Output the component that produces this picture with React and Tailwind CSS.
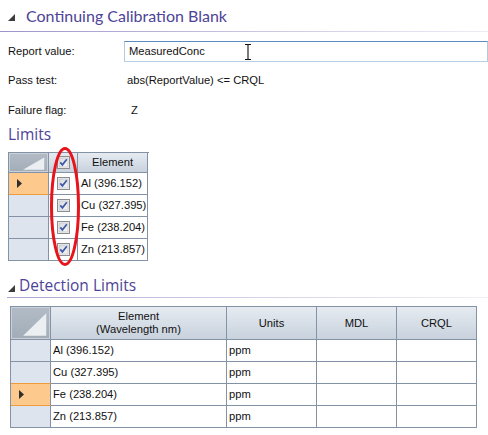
import React from "react";

const Tri = () => (
  <svg width="7" height="7" viewBox="0 0 7 7" className="shrink-0">
    <polygon points="7,0 7,7 0,7" fill="#3c3c3c" />
  </svg>
);

const Arrow = () => (
  <svg width="5" height="9" viewBox="0 0 5 9">
    <polygon points="0,0 5,4.5 0,9" fill="#2e2e2e" />
  </svg>
);

const Check = () => (
  <svg width="13" height="13" viewBox="0 0 13 13">
    <defs>
      <linearGradient id="cbg" x1="0" y1="0" x2="1" y2="1">
        <stop offset="0" stopColor="#d9dbde" />
        <stop offset="1" stopColor="#f6f6f6" />
      </linearGradient>
    </defs>
    <rect x="0.5" y="0.5" width="12" height="12" fill="#f4f4f4" stroke="#8a8c8f" />
    <rect x="2" y="2" width="9" height="9" fill="url(#cbg)" stroke="#b8bcc2" strokeWidth="0.6" />
    <path d="M3.3 6.4 L5.4 8.8 L9.8 3.2" fill="none" stroke="#3e57a8" strokeWidth="1.7" />
  </svg>
);

const Corner = ({ big }) => (
  <div className="w-full h-full bg-gradient-to-b from-[#b2bbc5] to-[#a3adb8] border border-[#c9d0d8] relative">
    <svg className="absolute inset-0 w-full h-full" viewBox="0 0 40 40" preserveAspectRatio="none">
      {big ? (
        <polygon points="12,37 37,37 37,7" fill="#eceff2" />
      ) : (
        <polygon points="14,37 37,37 37,8" fill="#eceff2" />
      )}
    </svg>
  </div>
);

const hdr = "bg-gradient-to-b from-[#e6ebf1] to-[#c8d2dd]";
const bc = "border-[#8392a5]";

export default function App() {
  const limits = ["Al (396.152)", "Cu (327.395)", "Fe (238.204)", "Zn (213.857)"];
  return (
    <div className="w-[488px] h-[435px] bg-white relative overflow-hidden font-['Liberation_Sans',Arial,sans-serif] text-[11.2px] text-[#111] whitespace-nowrap">
      {/* Title */}
      <div className="h-[31px] flex items-center pl-[8px] gap-[11px]">
        <div className="mt-[4px]"><Tri /></div>
        <span className="font-['Lato',sans-serif] text-[16px] text-[#4d4397]">Continuing Calibration Blank</span>
      </div>
      <div className="h-px bg-gradient-to-r from-[#9d95c9] via-[#c9c4e1] to-[#eeecf5]" />

      {/* Form */}
      <div className="mt-[9px] flex items-center h-[21px]">
        <div className="w-[124px] pl-[8px]">Report value:</div>
        <div className="flex-1 h-[21px] border border-[#b3c9de] border-t-[#5a8cc0] border-b-[#b8d0e6] flex items-center pl-[4px] relative">
          MeasuredConc
          <svg className="absolute left-[119px] top-[2px]" width="8" height="16" viewBox="0 0 8 16">
            <path d="M1 0.5 H7 M4 0.5 V15.5 M1 15.5 H7" stroke="#111" strokeWidth="1.1" fill="none" />
          </svg>
        </div>
      </div>
      <div className="mt-[2px] flex items-center h-[32px]">
        <div className="w-[127px] pl-[8px]">Pass test:</div>
        <div>abs(ReportValue) &lt;= CRQL</div>
      </div>
      <div className="flex items-center h-[28px]">
        <div className="w-[131px] pl-[8px]">Failure flag:</div>
        <div>Z</div>
      </div>

      {/* Limits */}
      <div className="h-[22px] flex items-center pl-[8px] font-['Open_Sans',sans-serif] text-[15.5px] text-[#4d4397]">Limits</div>
      <div className="ml-[8px] mt-[6px] w-[141px] border-l border-t border-[#8392a5] relative">
        <div className="grid grid-cols-[40px_29px_70px]">
          <div className={`h-[20px] border-r border-b ${bc}`}><Corner /></div>
          <div className={`h-[20px] border-r border-b ${bc} ${hdr} flex items-center justify-center`}><Check /></div>
          <div className={`h-[20px] border-r border-b ${bc} ${hdr} flex items-center justify-center`}>Element</div>
          {limits.map((l, i) => (
            <React.Fragment key={l}>
              <div className={`h-[22px] border-r border-b ${i === 0 ? "bg-[#fec98c] border-b-[#ef9a3c]" : "bg-[#dde4ed]"} ${bc} flex items-center pl-[8px]`}>
                {i === 0 && <Arrow />}
              </div>
              <div className={`h-[22px] border-r border-b ${bc} flex items-center justify-center`}><Check /></div>
              <div className={`h-[22px] border-r border-b ${bc} flex items-center pl-[3px] overflow-hidden`}>{l}</div>
            </React.Fragment>
          ))}
        </div>
      </div>

      {/* Detection Limits */}
      <div className="mt-[14px] h-[22px] flex items-center pl-[8px] gap-[4px]">
        <div className="mt-[4px]"><Tri /></div>
        <span className="font-['Open_Sans',sans-serif] text-[15.5px] text-[#4d4397]">Detection Limits</span>
      </div>
      <div className="ml-[7px] h-px bg-gradient-to-r from-[#aaa4cf] via-[#d4d0e8] to-[#f0eff6]" />
      <div className="ml-[10px] mt-[8px] w-[467px] border-l border-t border-[#8392a5]">
        <div className="grid grid-cols-[40px_176px_90px_80px_80px]">
          <div className={`h-[33px] border-r border-b ${bc}`}><Corner big /></div>
          <div className={`h-[33px] border-r border-b ${bc} ${hdr} flex flex-col items-center justify-center leading-[13px]`}>
            <span>Element</span>
            <span>(Wavelength nm)</span>
          </div>
          <div className={`h-[33px] border-r border-b ${bc} ${hdr} flex items-center justify-center`}>Units</div>
          <div className={`h-[33px] border-r border-b ${bc} ${hdr} flex items-center justify-center`}>MDL</div>
          <div className={`h-[33px] border-r border-b ${bc} ${hdr} flex items-center justify-center`}>CRQL</div>
          {limits.map((l, i) => (
            <React.Fragment key={l}>
              <div className={`h-[22px] border-r border-b ${bc} ${i === 2 ? "bg-[#fec98c] border-b-[#ef9a3c] border-t border-t-[#ef9a3c] -mt-px h-[23px]" : "bg-[#dde4ed]"} flex items-center pl-[8px]`}>
                {i === 2 && <Arrow />}
              </div>
              <div className={`h-[22px] border-r border-b ${bc} flex items-center pl-[2px]`}>{l}</div>
              <div className={`h-[22px] border-r border-b ${bc} flex items-center pl-[2px]`}>ppm</div>
              <div className={`h-[22px] border-r border-b ${bc}`} />
              <div className={`h-[22px] border-r border-b ${bc}`} />
            </React.Fragment>
          ))}
        </div>
      </div>

      {/* Red ellipse overlay */}
      <svg className="absolute left-0 top-0 pointer-events-none" width="488" height="435">
        <ellipse cx="65" cy="206.5" rx="13.5" ry="58" fill="none" stroke="#e8141b" strokeWidth="3" />
      </svg>
    </div>
  );
}
